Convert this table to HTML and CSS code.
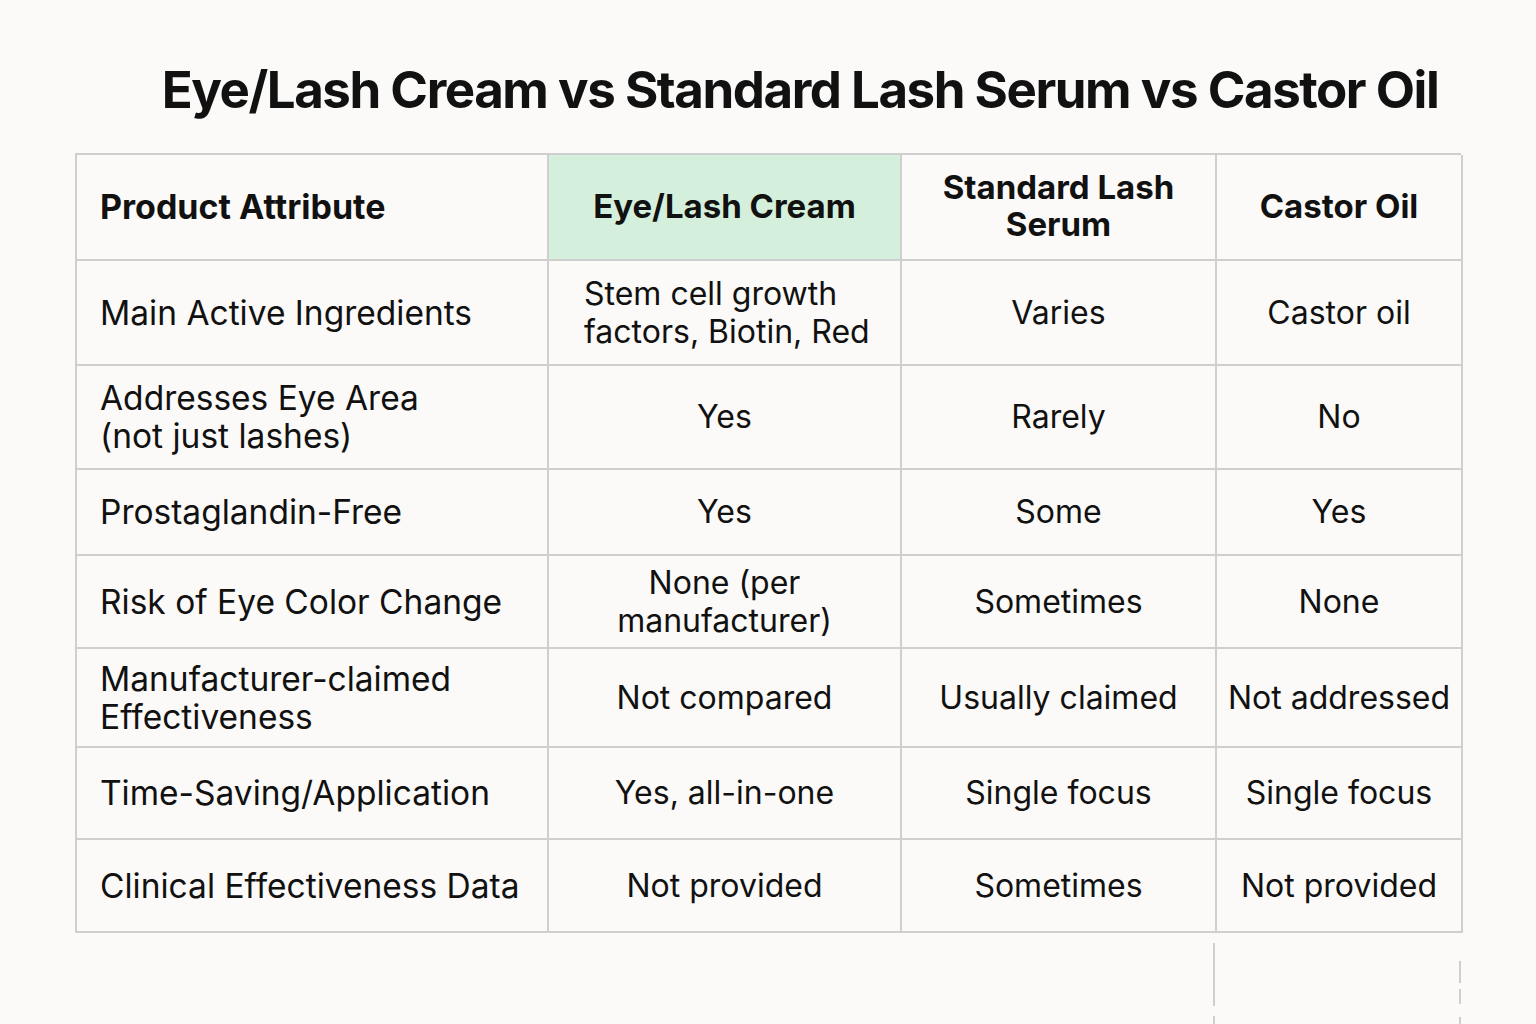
FILE: index.html
```html
<!DOCTYPE html>
<html lang="en">
<head>
<meta charset="utf-8">
<title>Eye/Lash Cream vs Standard Lash Serum vs Castor Oil</title>
<link rel="stylesheet" href="styles.css">
</head>
<body>
<main class="page">
  <h1 class="title">Eye/Lash Cream vs Standard Lash Serum vs Castor Oil</h1>
  <div class="table">
    <div class="cell head first">Product Attribute</div>
    <div class="cell head hl">Eye/Lash Cream</div>
    <div class="cell head">Standard Lash<br>Serum</div>
    <div class="cell head last">Castor Oil</div>

    <div class="cell first">Main Active Ingredients</div>
    <div class="cell left">Stem cell growth<br>factors, Biotin, Red</div>
    <div class="cell">Varies</div>
    <div class="cell last">Castor oil</div>

    <div class="cell first">Addresses Eye Area<br>(not just lashes)</div>
    <div class="cell">Yes</div>
    <div class="cell">Rarely</div>
    <div class="cell last">No</div>

    <div class="cell first">Prostaglandin-Free</div>
    <div class="cell">Yes</div>
    <div class="cell">Some</div>
    <div class="cell last">Yes</div>

    <div class="cell first">Risk of Eye Color Change</div>
    <div class="cell">None (per<br>manufacturer)</div>
    <div class="cell">Sometimes</div>
    <div class="cell last">None</div>

    <div class="cell first">Manufacturer-claimed<br>Effectiveness</div>
    <div class="cell">Not compared</div>
    <div class="cell">Usually claimed</div>
    <div class="cell last">Not addressed</div>

    <div class="cell first">Time-Saving/Application</div>
    <div class="cell">Yes, all-in-one</div>
    <div class="cell">Single focus</div>
    <div class="cell last">Single focus</div>

    <div class="cell first">Clinical Effectiveness Data</div>
    <div class="cell">Not provided</div>
    <div class="cell">Sometimes</div>
    <div class="cell last">Not provided</div>
  </div>
  <div class="tail">
    <span class="tail-gap"></span>
    <span class="tail-line solid"></span>
    <span class="tail-gap2"></span>
    <span class="tail-line dashed"></span>
  </div>
</main>
</body>
</html>
```
FILE: styles.css
```css
* { box-sizing: border-box; }
html, body {
  margin: 0;
  padding: 0;
  background: #fbfaf8;
}
body {
  font-family: "Inter", "DejaVu Sans", sans-serif;
  color: #111;
  height: 1024px;
  overflow: hidden;
}
.page {
  padding: 59px 75px 0 75px;
}
.title {
  margin: 0;
  padding-left: 64px;
  text-align: center;
  font-size: 51px;
  line-height: 62px;
  font-weight: 700;
  letter-spacing: -1.45px;
  color: #111;
}
.table {
  margin-top: 32px;
  width: 1386px;
  display: grid;
  grid-template-columns: 472px 353px 315px 246px;
  grid-template-rows: 106px 105px 104px 86px 93px 99px 92px 93px;
  border-top: 2px solid #cfcfcf;
  border-left: 2px solid #cfcfcf;
}
.cell {
  border-right: 2px solid #cfcfcf;
  border-bottom: 2px solid #cfcfcf;
  display: flex;
  align-items: center;
  justify-content: center;
  text-align: center;
  font-size: 32px;
  line-height: 38px;
  font-weight: 400;
  padding: 0 6px;
}
.cell.first {
  justify-content: flex-start;
  text-align: left;
  padding-left: 23px;
  font-size: 33.5px;
}
.cell.left {
  justify-content: flex-start;
  text-align: left;
  padding-left: 35px;
}
.cell.head {
  font-weight: 700;
  font-size: 33px;
  line-height: 37px;
  padding-bottom: 2px;
}
.cell.head.first {
  font-size: 34px;
}
.cell.hl {
  background: #d4f0dc;
}
.tail {
  display: flex;
  height: 92px;
}
.tail-gap { width: 1140px; }
.tail-line {
  width: 2px;
  height: 100%;
}
.tail-line.solid {
  margin-top: 10px;
  background: linear-gradient(#cfcfcf 0 63px, transparent 63px 73px, #cfcfcf 73px);
}
.tail-gap2 { width: 244px; }
.tail-line.dashed {
  margin-top: 28px;
  background: linear-gradient(#cfcfcf 0 22px, transparent 22px 28px, #cfcfcf 28px 43px, transparent 43px 56px, #cfcfcf 56px);
}
```
